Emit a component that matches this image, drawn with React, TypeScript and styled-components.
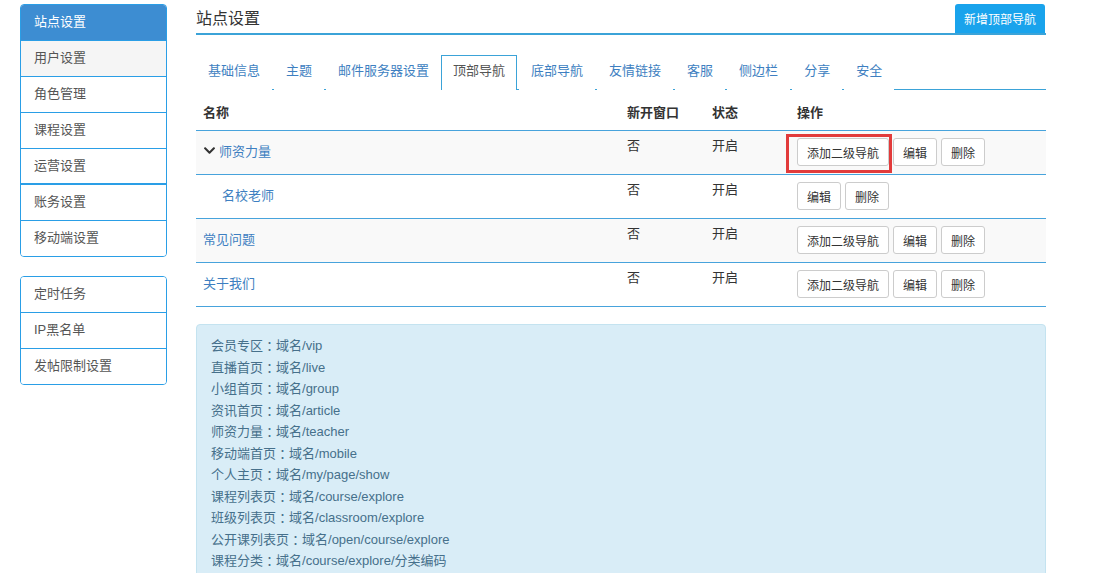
import React from 'react'
import styled, { createGlobalStyle } from 'styled-components'
import { FaChevronDown } from 'react-icons/fa'

const GlobalStyle = createGlobalStyle`
  html, body {
    margin: 0;
    padding: 0;
    background: #fff;
  }
  body {
    font-family: "Liberation Sans", "Noto Sans CJK SC", sans-serif;
    font-size: 13px;
    color: #333;
  }
`

const blue = '#2a9ee6'
const lineBlue = '#3ba3d8'
const linkColor = '#3e7fc1'

const sideGroups = [
  [
    { label: '站点设置', active: true },
    { label: '用户设置', hover: true },
    { label: '角色管理' },
    { label: '课程设置' },
    { label: '运营设置', thick: true },
    { label: '账务设置' },
    { label: '移动端设置' },
  ],
  [{ label: '定时任务' }, { label: 'IP黑名单' }, { label: '发帖限制设置' }],
]

const tabs = ['基础信息', '主题', '邮件服务器设置', '顶部导航', '底部导航', '友情链接', '客服', '侧边栏', '分享', '安全']

const rows = [
  { name: '师资力量', open: true, child: false, addSub: true, striped: true, mark: true },
  { name: '名校老师', open: false, child: true, addSub: false, striped: false, mark: false },
  { name: '常见问题', open: false, child: false, addSub: true, striped: true, mark: false },
  { name: '关于我们', open: false, child: false, addSub: true, striped: false, mark: false },
]

const routes = [
  ['会员专区', '域名/vip'],
  ['直播首页', '域名/live'],
  ['小组首页', '域名/group'],
  ['资讯首页', '域名/article'],
  ['师资力量', '域名/teacher'],
  ['移动端首页', '域名/mobile'],
  ['个人主页', '域名/my/page/show'],
  ['课程列表页', '域名/course/explore'],
  ['班级列表页', '域名/classroom/explore'],
  ['公开课列表页', '域名/open/course/explore'],
  ['课程分类', '域名/course/explore/分类编码'],
]

export default function App() {
  return (
    <>
      <GlobalStyle />
      <Page>
        <Sidebar>
          {sideGroups.map((group, gi) => (
            <SideGroup key={gi}>
              {group.map((item: any) => (
                <SideItem key={item.label} $active={item.active} $hover={item.hover} $thick={item.thick}>
                  {item.label}
                </SideItem>
              ))}
            </SideGroup>
          ))}
        </Sidebar>

        <Main>
          <Header>
            <Title>站点设置</Title>
            <PrimaryButton>新增顶部导航</PrimaryButton>
          </Header>

          <TabBar>
            {tabs.map((t) => (
              <Tab key={t} $active={t === '顶部导航'}>{t}</Tab>
            ))}
          </TabBar>

          <Table>
            <colgroup>
              <col style={{ width: 424 }} />
              <col style={{ width: 85 }} />
              <col style={{ width: 85 }} />
              <col />
            </colgroup>
            <thead>
              <tr>
                <Th>名称</Th>
                <Th>新开窗口</Th>
                <Th>状态</Th>
                <Th>操作</Th>
              </tr>
            </thead>
            <tbody>
              {rows.map((r) => (
                <Row key={r.name} $striped={r.striped}>
                  <NameCell $child={r.child}>
                    {r.open && <Chevron><FaChevronDown /></Chevron>}
                    {r.name}
                  </NameCell>
                  <Td>否</Td>
                  <Td>开启</Td>
                  <ActionCell>
                    <Actions>
                      {r.mark && <Highlight />}
                      {r.addSub && <Btn>添加二级导航</Btn>}
                      <Btn>编辑</Btn>
                      <Btn>删除</Btn>
                    </Actions>
                  </ActionCell>
                </Row>
              ))}
            </tbody>
          </Table>

          <InfoBox>
            {routes.map(([label, path]) => (
              <InfoLine key={label}>
                {label}
                <Colon>：</Colon>
                {path}
              </InfoLine>
            ))}
          </InfoBox>
        </Main>
      </Page>
    </>
  )
}

const Page = styled.div`
  display: flex;
  align-items: flex-start;
  gap: 29px;
  padding: 4px 0 0 20px;
  width: 1046px;
  height: 569px;
  overflow: hidden;
`

const Sidebar = styled.div`
  width: 147px;
  flex-shrink: 0;
  display: flex;
  flex-direction: column;
  gap: 19px;
`

const SideGroup = styled.div`
  border: 1px solid ${blue};
  border-radius: 4px;
  overflow: hidden;
`

const SideItem = styled.div<{ $active?: boolean; $hover?: boolean; $thick?: boolean }>`
  height: 36px;
  line-height: 33px;
  padding-left: 13px;
  font-size: 13px;
  color: ${(p) => (p.$active ? '#fff' : '#555')};
  background: ${(p) => (p.$active ? '#3d8dd2' : p.$hover ? '#f5f5f5' : '#fff')};
  border-bottom: ${(p) => (p.$thick ? 2 : 1)}px solid ${blue};
  box-sizing: border-box;

  &:last-child {
    border-bottom: none;
    height: 35px;
  }
`

const Main = styled.div`
  width: 850px;
  flex-shrink: 0;
  display: flex;
  flex-direction: column;
`

const Header = styled.div`
  display: flex;
  align-items: flex-end;
  justify-content: space-between;
  border-bottom: 2px solid ${lineBlue};
  height: 29px;
`

const Title = styled.h1`
  margin: 0 0 4px;
  font-size: 16px;
  font-weight: normal;
  color: #333;
`

const PrimaryButton = styled.button`
  height: 29px;
  padding: 0 9px;
  border: none;
  border-radius: 3px 3px 0 0;
  background: #19a3ec;
  color: #fff;
  font-family: inherit;
  font-size: 12px;
  margin-right: 1px;
`

const TabBar = styled.div`
  display: flex;
  margin-top: 20px;
  border-bottom: 1px solid ${lineBlue};
  height: 34px;
`

const Tab = styled.div<{ $active?: boolean }>`
  padding: 0 11px;
  margin-right: 2px;
  line-height: 30px;
  font-size: 13px;
  color: ${(p) => (p.$active ? '#555' : linkColor)};
  border: 1px solid ${(p) => (p.$active ? lineBlue : 'transparent')};
  border-bottom: none;
  background: #fff;
  height: 35px;
  box-sizing: border-box;

  &:nth-child(3) {
    margin-right: 0;
  }
`

const Table = styled.table`
  width: 100%;
  border-collapse: collapse;
  table-layout: fixed;
  margin-top: 7px;
`

const Th = styled.th`
  text-align: left;
  font-weight: bold;
  font-size: 13px;
  line-height: 16px;
  color: #333;
  padding: 8px 7px 9px;
  border-bottom: 1px solid #47a3dc;
`

const Row = styled.tr<{ $striped?: boolean }>`
  background: ${(p) => (p.$striped ? '#f9f9f9' : '#fff')};
  border-bottom: 1px solid #47a3dc;
`

const Td = styled.td`
  padding: 7px 7px 8px;
  vertical-align: top;
  font-size: 13px;
  color: #333;
  line-height: 16px;
`

const NameCell = styled(Td)<{ $child?: boolean }>`
  vertical-align: middle;
  color: ${linkColor};
  padding-left: ${(p) => (p.$child ? 26 : 7)}px;
`

const Chevron = styled.span`
  display: inline-block;
  color: #333;
  font-size: 13px;
  margin-right: 3px;
  vertical-align: -1px;
`

const ActionCell = styled(Td)`
  padding: 7px 7px 8px;
`

const Actions = styled.div`
  position: relative;
  display: flex;
  gap: 4px;
`

const Btn = styled.button`
  height: 28px;
  padding: 0 9px;
  border: 1px solid #ccc;
  border-radius: 3px;
  background: #fff;
  color: #333;
  font-family: inherit;
  font-size: 12px;
`

const Highlight = styled.span`
  position: absolute;
  left: -11px;
  top: -4px;
  width: 106px;
  height: 39px;
  border: 3px solid #e23b3b;
  box-sizing: border-box;
  pointer-events: none;
`

const InfoBox = styled.div`
  margin-top: 17px;
  padding: 10px 14px 20px;
  background: #d9edf7;
  border: 1px solid #c4e3f0;
  border-radius: 4px;
`

const InfoLine = styled.div`
  font-size: 13px;
  height: 21.5px;
  line-height: 21.5px;
  color: #46708b;
  white-space: nowrap;
`

const Colon = styled.span`
  display: inline-block;
  height: 21.5px;
  line-height: 21.5px;
  vertical-align: top;
  font-family: "Noto Sans CJK TC", sans-serif;
`
